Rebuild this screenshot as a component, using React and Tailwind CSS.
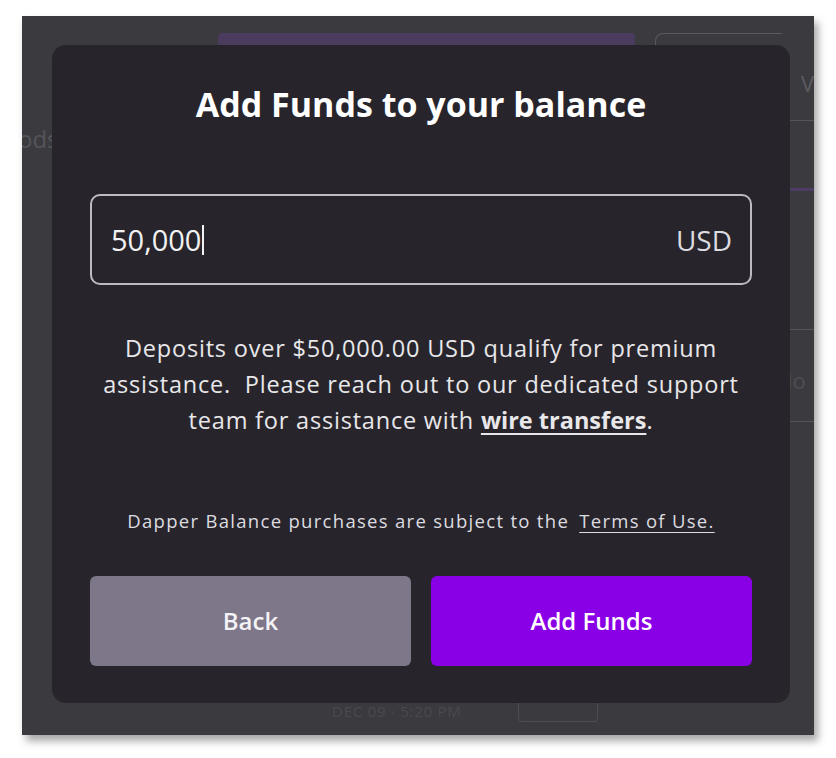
export default function App() {
  return (
    <div className="min-h-screen w-full bg-white pt-[16px] pl-[22px]" style={{ fontFamily: '"Open Sans", Lato, sans-serif' }}>
      <div className="relative h-[719px] w-[792px] overflow-hidden bg-[#3b3a3f] shadow-[4px_6px_8px_rgba(0,0,0,0.35)]">
        {/* Background page, dimmed behind the modal */}
        <div className="flex h-full">
          <div className="flex w-[768px] flex-col">
            <div className="flex items-start pt-[17px]">
              <div className="ml-[196px] h-[14px] w-[417px] rounded-sm bg-[#4b3b5f]" />
              <div className="ml-[20px] h-[60px] flex-1 rounded-tl-lg border-l border-t border-[#5a5960]" />
            </div>
            <div className="-ml-[4px] mt-[28px] text-[24px] text-[#55545a]">ods</div>
            <div className="mt-auto flex items-center pb-[13px] pl-[310px]">
              <span className="text-[15px] tracking-wider text-[#4a4950]">DEC 09 · 5:20 PM</span>
              <span className="ml-[56px] h-[22px] w-[80px] rounded border border-[#4f4e55]" />
            </div>
          </div>
          <div className="flex flex-1 flex-col pt-[52px]">
            <div className="ml-[19px] h-[52px] text-[22px] leading-[30px] text-[#5b5a60]">V</div>
            <div className="h-px bg-[#55545a]" />
            <div className="mt-[67px] h-[3px] bg-[#4e3e66]" />
            <div className="mt-[138px] h-px bg-[#55545a]" />
            <div className="ml-[5px] mt-[35px] h-[56px] text-[22px] leading-[30px] text-[#4f4e55]">lo</div>
            <div className="h-px bg-[#55545a]" />
          </div>
        </div>

        {/* Modal overlay */}
        <div className="absolute left-[30px] top-[29px] flex h-[658px] w-[738px] flex-col items-center rounded-[14px] bg-[#27252b] px-[38px] pt-[37px]">
          <h1 className="text-[34px] font-bold leading-[44px] text-white">Add Funds to your balance</h1>

          <div className="mt-[68px] flex h-[91px] w-full items-center justify-between rounded-[10px] border-2 border-[#bdbbc1] pl-[19px] pr-[18px]">
            <div className="flex items-center text-[29px] text-[#f2f2f2]">
              <span>50,000</span>
              <span className="ml-px h-[30px] w-[2px] bg-[#f2f2f2]" />
            </div>
            <span className="text-[28px] text-[#dcdbe0]">USD</span>
          </div>

          <p className="mt-[45px] text-center text-[23.5px] leading-[36px] tracking-[0.8px] text-[#e8e7ea]">
            Deposits over $50,000.00 USD qualify for premium
            <br />
            assistance.&nbsp; Please reach out to our dedicated support
            <br />
            team for assistance with{' '}
            <a className="font-bold tracking-normal underline decoration-2 underline-offset-4">wire transfers</a>.
          </p>

          <p className="mt-[71px] text-center text-[18.5px] leading-[24px] tracking-[1.3px] text-[#dddce0]">
            Dapper Balance purchases are subject to the{' '}
            <a className="ml-1 underline underline-offset-4">Terms of Use.</a>
          </p>

          <div className="mt-[43px] grid w-full grid-cols-2 gap-[20px]">
            <button className="flex h-[90px] items-center justify-center rounded-[6px] bg-[#7d7789] text-[24px] font-semibold text-[#f3f2f5]">
              Back
            </button>
            <button className="flex h-[90px] items-center justify-center rounded-[6px] bg-[#8a00e6] text-[24px] font-semibold text-white">
              Add Funds
            </button>
          </div>
        </div>
      </div>
    </div>
  );
}
